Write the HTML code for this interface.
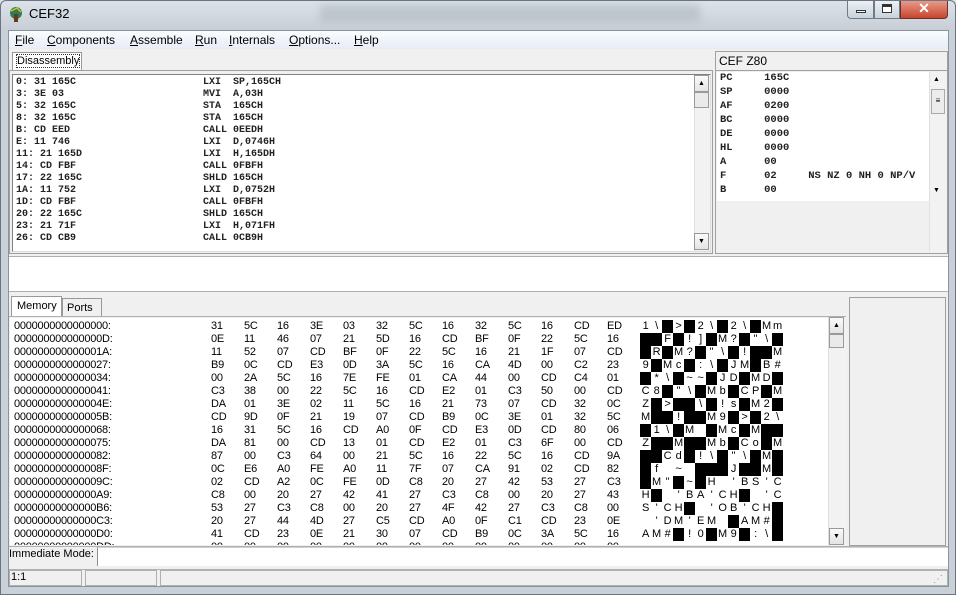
<!DOCTYPE html>
<html><head><meta charset="utf-8">
<style>
*{margin:0;padding:0;box-sizing:border-box}
body{width:956px;height:595px;overflow:hidden;background:#c9d0d8;font-family:"Liberation Sans",sans-serif;position:relative}
.abs{position:absolute}
#title{left:0;top:0;width:956px;height:30px;background:linear-gradient(#dde3ea,#c8ced6)}
#frame{left:0;top:0;width:956px;height:595px;border:1px solid #6b7480;border-radius:6px 6px 0 0}
#client{left:8px;top:30px;width:941px;height:557px;background:#f0f0f0;border:1px solid #8a949f}
#menu{left:9px;top:31px;width:939px;height:18px;background:linear-gradient(#fafcff,#e6ecf6);font-size:12px}
#menu span{position:absolute;top:2px}
.mono{font-family:"Liberation Mono",monospace;font-weight:bold;font-size:10px;color:#222}
.sb{background:#f2f2f2;border-left:1px solid #e0e0e0}
.arr{position:absolute;width:15px;height:17px;background:linear-gradient(#fafafa,#e4e4e4);border:1px solid #9a9a9a;font-size:7px;text-align:center;line-height:15px;color:#000}
.row{position:absolute;left:14px;height:13px;font-size:11px;line-height:13px;white-space:nowrap;color:#000;letter-spacing:-0.25px}
.row i{font-style:normal;position:absolute;top:0}
.row b{font-weight:normal;position:absolute;top:0;width:11px;height:13px;text-align:center}
.row b.k{background:#000}
</style></head><body>
<div class="abs" id="title"></div>
<div class="abs" style="left:320px;top:4px;width:380px;height:18px;background:rgba(150,160,170,.35);filter:blur(4px)"></div>
<svg class="abs" style="left:7px;top:5px" width="18" height="18"><circle cx="9" cy="8" r="6" fill="#2e7d5a"/><rect x="7" y="9" width="4" height="8" fill="#6b3a1a"/><path d="M4 6l6-3 4 4" stroke="#d8c020" fill="none" stroke-width="1.5"/></svg>
<div class="abs" style="left:29px;top:6px;font-size:13px;color:#000">CEF32</div>
<!-- window buttons -->
<div class="abs" style="left:847px;top:0;width:27px;height:19px;border:1px solid #6d7a88;border-top:0;border-radius:0 0 0 4px;background:linear-gradient(#eef2f6,#c9d2dc)"><div class="abs" style="left:8px;top:10px;width:10px;height:3px;border:1px solid #333;background:#fff"></div></div>
<div class="abs" style="left:874px;top:0;width:26px;height:19px;border:1px solid #6d7a88;border-top:0;background:linear-gradient(#eef2f6,#c9d2dc)"><div class="abs" style="left:7px;top:4px;width:10px;height:9px;border:1px solid #333;border-top:3px solid #333;background:#fff"></div></div>
<div class="abs" style="left:900px;top:0;width:48px;height:19px;border:1px solid #6d3030;border-top:0;border-radius:0 0 4px 0;background:linear-gradient(#e8a08e,#c8452e);color:#fff;font-weight:bold;font-size:14px;text-align:center;line-height:17px">✕</div>
<div class="abs" id="client"></div>
<div class="abs" id="menu">
<span style="left:6px"><u>F</u>ile</span><span style="left:38px"><u>C</u>omponents</span><span style="left:121px"><u>A</u>ssemble</span><span style="left:186px"><u>R</u>un</span><span style="left:220px"><u>I</u>nternals</span><span style="left:280px"><u>O</u>ptions...</span><span style="left:345px"><u>H</u>elp</span>
</div>
<!-- disassembly tab -->
<div class="abs" style="left:12px;top:52px;width:70px;height:19px;background:#fff;border:1px solid #999;border-bottom:0;font-size:11px;padding:2px 0 0 4px"><span style="outline:1px dotted #333">Disassembly</span></div>
<div class="abs" style="left:9px;top:70px;width:704px;height:184px;border:1px solid #a0a0a0;background:#f0f0f0"></div>
<div class="abs" style="left:12px;top:74px;width:699px;height:178px;border:1px solid #808080;border-right:1px solid #ddd;border-bottom:1px solid #ddd;background:#fff"></div>
<div class="abs sb" style="left:694px;top:75px;width:16px;height:176px"></div>
<div class="arr" style="left:694px;top:75px">▲</div>
<div class="arr" style="left:694px;top:92px;height:16px;background:#eaeaea"></div>
<div class="arr" style="left:694px;top:233px">▼</div>
<div class="abs mono" style="left:16px;top:77px;line-height:12px;white-space:pre">0: 31 165C
3: 3E 03
5: 32 165C
8: 32 165C
B: CD EED
E: 11 746
11: 21 165D
14: CD FBF
17: 22 165C
1A: 11 752
1D: CD FBF
20: 22 165C
23: 21 71F
26: CD CB9</div>
<div class="abs mono" style="left:203px;top:77px;line-height:12px;white-space:pre">LXI  SP,165CH
MVI  A,03H
STA  165CH
STA  165CH
CALL 0EEDH
LXI  D,0746H
LXI  H,165DH
CALL 0FBFH
SHLD 165CH
LXI  D,0752H
CALL 0FBFH
SHLD 165CH
LXI  H,071FH
CALL 0CB9H</div>
<!-- register pane -->
<div class="abs" style="left:715px;top:51px;width:233px;height:203px;border:1px solid #a0a0a0;background:#f0f0f0"></div>
<div class="abs" style="left:719px;top:54px;font-size:12px">CEF Z80</div>
<div class="abs" style="left:716px;top:70px;width:231px;height:1px;background:#a0a0a0"></div>
<div class="abs" style="left:717px;top:72px;width:212px;height:129px;background:#fff"></div>
<div class="abs sb" style="left:929px;top:72px;width:17px;height:180px"></div>
<div class="abs" style="left:933px;top:76px;font-size:7px">▲</div>
<div class="abs" style="left:931px;top:89px;width:14px;height:25px;border:1px solid #aaa;background:#ececec;font-size:8px;text-align:center;line-height:22px">≡</div>
<div class="abs" style="left:933px;top:187px;font-size:7px">▼</div>
<div class="abs mono" style="left:720px;top:71px;line-height:14px;white-space:pre;font-size:10.5px">PC     165C
SP     0000
AF     0200
BC     0000
DE     0000
HL     0000
A      00
F      02     NS NZ 0 NH 0 NP/V
B      00</div>
<!-- white band -->
<div class="abs" style="left:9px;top:256px;width:939px;height:36px;background:#fff;border-top:1px solid #b0b0b0;border-bottom:1px solid #b0b0b0"></div>
<!-- memory tabs -->
<div class="abs" style="left:11px;top:296px;width:51px;height:21px;background:#fff;border:1px solid #999;border-bottom:0;font-size:11px;padding:3px 0 0 5px">Memory</div>
<div class="abs" style="left:62px;top:298px;width:40px;height:19px;background:#f0f0f0;border:1px solid #999;border-bottom:0;font-size:11px;padding:3px 0 0 4px">Ports</div>
<div class="abs" style="left:9px;top:316px;width:837px;height:1px;background:#b0b0b0"></div>
<div class="abs" style="left:10px;top:318px;width:818px;height:227px;background:#fff;overflow:hidden">
<div style="position:relative;left:-10px;top:-318px">
<div class="row" style="top:320px">0000000000000000:<i style="left:197px">31</i><i style="left:230px">5C</i><i style="left:263px">16</i><i style="left:296px">3E</i><i style="left:329px">03</i><i style="left:362px">32</i><i style="left:395px">5C</i><i style="left:428px">16</i><i style="left:461px">32</i><i style="left:494px">5C</i><i style="left:527px">16</i><i style="left:560px">CD</i><i style="left:593px">ED</i><b style="left:626px">1</b><b style="left:637px">\</b><b class="k" style="left:648px"></b><b style="left:659px">&gt;</b><b class="k" style="left:670px"></b><b style="left:681px">2</b><b style="left:692px">\</b><b class="k" style="left:703px"></b><b style="left:714px">2</b><b style="left:725px">\</b><b class="k" style="left:736px"></b><b style="left:747px">M</b><b style="left:758px">m</b></div>
<div class="row" style="top:333px">000000000000000D:<i style="left:197px">0E</i><i style="left:230px">11</i><i style="left:263px">46</i><i style="left:296px">07</i><i style="left:329px">21</i><i style="left:362px">5D</i><i style="left:395px">16</i><i style="left:428px">CD</i><i style="left:461px">BF</i><i style="left:494px">0F</i><i style="left:527px">22</i><i style="left:560px">5C</i><i style="left:593px">16</i><b class="k" style="left:626px"></b><b class="k" style="left:637px"></b><b style="left:648px">F</b><b class="k" style="left:659px"></b><b style="left:670px">!</b><b style="left:681px">]</b><b class="k" style="left:692px"></b><b style="left:703px">M</b><b style="left:714px">?</b><b class="k" style="left:725px"></b><b style="left:736px">"</b><b style="left:747px">\</b><b class="k" style="left:758px"></b></div>
<div class="row" style="top:346px">000000000000001A:<i style="left:197px">11</i><i style="left:230px">52</i><i style="left:263px">07</i><i style="left:296px">CD</i><i style="left:329px">BF</i><i style="left:362px">0F</i><i style="left:395px">22</i><i style="left:428px">5C</i><i style="left:461px">16</i><i style="left:494px">21</i><i style="left:527px">1F</i><i style="left:560px">07</i><i style="left:593px">CD</i><b class="k" style="left:626px"></b><b style="left:637px">R</b><b class="k" style="left:648px"></b><b style="left:659px">M</b><b style="left:670px">?</b><b class="k" style="left:681px"></b><b style="left:692px">"</b><b style="left:703px">\</b><b class="k" style="left:714px"></b><b style="left:725px">!</b><b class="k" style="left:736px"></b><b class="k" style="left:747px"></b><b style="left:758px">M</b></div>
<div class="row" style="top:359px">0000000000000027:<i style="left:197px">B9</i><i style="left:230px">0C</i><i style="left:263px">CD</i><i style="left:296px">E3</i><i style="left:329px">0D</i><i style="left:362px">3A</i><i style="left:395px">5C</i><i style="left:428px">16</i><i style="left:461px">CA</i><i style="left:494px">4D</i><i style="left:527px">00</i><i style="left:560px">C2</i><i style="left:593px">23</i><b style="left:626px">9</b><b class="k" style="left:637px"></b><b style="left:648px">M</b><b style="left:659px">c</b><b class="k" style="left:670px"></b><b style="left:681px">:</b><b style="left:692px">\</b><b class="k" style="left:703px"></b><b style="left:714px">J</b><b style="left:725px">M</b><b class="k" style="left:736px"></b><b style="left:747px">B</b><b style="left:758px">#</b></div>
<div class="row" style="top:372px">0000000000000034:<i style="left:197px">00</i><i style="left:230px">2A</i><i style="left:263px">5C</i><i style="left:296px">16</i><i style="left:329px">7E</i><i style="left:362px">FE</i><i style="left:395px">01</i><i style="left:428px">CA</i><i style="left:461px">44</i><i style="left:494px">00</i><i style="left:527px">CD</i><i style="left:560px">C4</i><i style="left:593px">01</i><b class="k" style="left:626px"></b><b style="left:637px">*</b><b style="left:648px">\</b><b class="k" style="left:659px"></b><b style="left:670px">~</b><b style="left:681px">~</b><b class="k" style="left:692px"></b><b style="left:703px">J</b><b style="left:714px">D</b><b class="k" style="left:725px"></b><b style="left:736px">M</b><b style="left:747px">D</b><b class="k" style="left:758px"></b></div>
<div class="row" style="top:385px">0000000000000041:<i style="left:197px">C3</i><i style="left:230px">38</i><i style="left:263px">00</i><i style="left:296px">22</i><i style="left:329px">5C</i><i style="left:362px">16</i><i style="left:395px">CD</i><i style="left:428px">E2</i><i style="left:461px">01</i><i style="left:494px">C3</i><i style="left:527px">50</i><i style="left:560px">00</i><i style="left:593px">CD</i><b style="left:626px">C</b><b style="left:637px">8</b><b class="k" style="left:648px"></b><b style="left:659px">"</b><b style="left:670px">\</b><b class="k" style="left:681px"></b><b style="left:692px">M</b><b style="left:703px">b</b><b class="k" style="left:714px"></b><b style="left:725px">C</b><b style="left:736px">P</b><b class="k" style="left:747px"></b><b style="left:758px">M</b></div>
<div class="row" style="top:398px">000000000000004E:<i style="left:197px">DA</i><i style="left:230px">01</i><i style="left:263px">3E</i><i style="left:296px">02</i><i style="left:329px">11</i><i style="left:362px">5C</i><i style="left:395px">16</i><i style="left:428px">21</i><i style="left:461px">73</i><i style="left:494px">07</i><i style="left:527px">CD</i><i style="left:560px">32</i><i style="left:593px">0C</i><b style="left:626px">Z</b><b class="k" style="left:637px"></b><b style="left:648px">&gt;</b><b class="k" style="left:659px"></b><b class="k" style="left:670px"></b><b style="left:681px">\</b><b class="k" style="left:692px"></b><b style="left:703px">!</b><b style="left:714px">s</b><b class="k" style="left:725px"></b><b style="left:736px">M</b><b style="left:747px">2</b><b class="k" style="left:758px"></b></div>
<div class="row" style="top:411px">000000000000005B:<i style="left:197px">CD</i><i style="left:230px">9D</i><i style="left:263px">0F</i><i style="left:296px">21</i><i style="left:329px">19</i><i style="left:362px">07</i><i style="left:395px">CD</i><i style="left:428px">B9</i><i style="left:461px">0C</i><i style="left:494px">3E</i><i style="left:527px">01</i><i style="left:560px">32</i><i style="left:593px">5C</i><b style="left:626px">M</b><b class="k" style="left:637px"></b><b class="k" style="left:648px"></b><b style="left:659px">!</b><b class="k" style="left:670px"></b><b class="k" style="left:681px"></b><b style="left:692px">M</b><b style="left:703px">9</b><b class="k" style="left:714px"></b><b style="left:725px">&gt;</b><b class="k" style="left:736px"></b><b style="left:747px">2</b><b style="left:758px">\</b></div>
<div class="row" style="top:424px">0000000000000068:<i style="left:197px">16</i><i style="left:230px">31</i><i style="left:263px">5C</i><i style="left:296px">16</i><i style="left:329px">CD</i><i style="left:362px">A0</i><i style="left:395px">0F</i><i style="left:428px">CD</i><i style="left:461px">E3</i><i style="left:494px">0D</i><i style="left:527px">CD</i><i style="left:560px">80</i><i style="left:593px">06</i><b class="k" style="left:626px"></b><b style="left:637px">1</b><b style="left:648px">\</b><b class="k" style="left:659px"></b><b style="left:670px">M</b><b style="left:681px"> </b><b class="k" style="left:692px"></b><b style="left:703px">M</b><b style="left:714px">c</b><b class="k" style="left:725px"></b><b style="left:736px">M</b><b class="k" style="left:747px"></b><b class="k" style="left:758px"></b></div>
<div class="row" style="top:437px">0000000000000075:<i style="left:197px">DA</i><i style="left:230px">81</i><i style="left:263px">00</i><i style="left:296px">CD</i><i style="left:329px">13</i><i style="left:362px">01</i><i style="left:395px">CD</i><i style="left:428px">E2</i><i style="left:461px">01</i><i style="left:494px">C3</i><i style="left:527px">6F</i><i style="left:560px">00</i><i style="left:593px">CD</i><b style="left:626px">Z</b><b class="k" style="left:637px"></b><b class="k" style="left:648px"></b><b style="left:659px">M</b><b class="k" style="left:670px"></b><b class="k" style="left:681px"></b><b style="left:692px">M</b><b style="left:703px">b</b><b class="k" style="left:714px"></b><b style="left:725px">C</b><b style="left:736px">o</b><b class="k" style="left:747px"></b><b style="left:758px">M</b></div>
<div class="row" style="top:450px">0000000000000082:<i style="left:197px">87</i><i style="left:230px">00</i><i style="left:263px">C3</i><i style="left:296px">64</i><i style="left:329px">00</i><i style="left:362px">21</i><i style="left:395px">5C</i><i style="left:428px">16</i><i style="left:461px">22</i><i style="left:494px">5C</i><i style="left:527px">16</i><i style="left:560px">CD</i><i style="left:593px">9A</i><b class="k" style="left:626px"></b><b class="k" style="left:637px"></b><b style="left:648px">C</b><b style="left:659px">d</b><b class="k" style="left:670px"></b><b style="left:681px">!</b><b style="left:692px">\</b><b class="k" style="left:703px"></b><b style="left:714px">"</b><b style="left:725px">\</b><b class="k" style="left:736px"></b><b style="left:747px">M</b><b class="k" style="left:758px"></b></div>
<div class="row" style="top:463px">000000000000008F:<i style="left:197px">0C</i><i style="left:230px">E6</i><i style="left:263px">A0</i><i style="left:296px">FE</i><i style="left:329px">A0</i><i style="left:362px">11</i><i style="left:395px">7F</i><i style="left:428px">07</i><i style="left:461px">CA</i><i style="left:494px">91</i><i style="left:527px">02</i><i style="left:560px">CD</i><i style="left:593px">82</i><b class="k" style="left:626px"></b><b style="left:637px">f</b><b style="left:648px"> </b><b style="left:659px">~</b><b style="left:670px"> </b><b class="k" style="left:681px"></b><b class="k" style="left:692px"></b><b class="k" style="left:703px"></b><b style="left:714px">J</b><b class="k" style="left:725px"></b><b class="k" style="left:736px"></b><b style="left:747px">M</b><b class="k" style="left:758px"></b></div>
<div class="row" style="top:476px">000000000000009C:<i style="left:197px">02</i><i style="left:230px">CD</i><i style="left:263px">A2</i><i style="left:296px">0C</i><i style="left:329px">FE</i><i style="left:362px">0D</i><i style="left:395px">C8</i><i style="left:428px">20</i><i style="left:461px">27</i><i style="left:494px">42</i><i style="left:527px">53</i><i style="left:560px">27</i><i style="left:593px">C3</i><b class="k" style="left:626px"></b><b style="left:637px">M</b><b style="left:648px">"</b><b class="k" style="left:659px"></b><b style="left:670px">~</b><b class="k" style="left:681px"></b><b style="left:692px">H</b><b style="left:703px"> </b><b style="left:714px">'</b><b style="left:725px">B</b><b style="left:736px">S</b><b style="left:747px">'</b><b style="left:758px">C</b></div>
<div class="row" style="top:489px">00000000000000A9:<i style="left:197px">C8</i><i style="left:230px">00</i><i style="left:263px">20</i><i style="left:296px">27</i><i style="left:329px">42</i><i style="left:362px">41</i><i style="left:395px">27</i><i style="left:428px">C3</i><i style="left:461px">C8</i><i style="left:494px">00</i><i style="left:527px">20</i><i style="left:560px">27</i><i style="left:593px">43</i><b style="left:626px">H</b><b class="k" style="left:637px"></b><b style="left:648px"> </b><b style="left:659px">'</b><b style="left:670px">B</b><b style="left:681px">A</b><b style="left:692px">'</b><b style="left:703px">C</b><b style="left:714px">H</b><b class="k" style="left:725px"></b><b style="left:736px"> </b><b style="left:747px">'</b><b style="left:758px">C</b></div>
<div class="row" style="top:502px">00000000000000B6:<i style="left:197px">53</i><i style="left:230px">27</i><i style="left:263px">C3</i><i style="left:296px">C8</i><i style="left:329px">00</i><i style="left:362px">20</i><i style="left:395px">27</i><i style="left:428px">4F</i><i style="left:461px">42</i><i style="left:494px">27</i><i style="left:527px">C3</i><i style="left:560px">C8</i><i style="left:593px">00</i><b style="left:626px">S</b><b style="left:637px">'</b><b style="left:648px">C</b><b style="left:659px">H</b><b class="k" style="left:670px"></b><b style="left:681px"> </b><b style="left:692px">'</b><b style="left:703px">O</b><b style="left:714px">B</b><b style="left:725px">'</b><b style="left:736px">C</b><b style="left:747px">H</b><b class="k" style="left:758px"></b></div>
<div class="row" style="top:515px">00000000000000C3:<i style="left:197px">20</i><i style="left:230px">27</i><i style="left:263px">44</i><i style="left:296px">4D</i><i style="left:329px">27</i><i style="left:362px">C5</i><i style="left:395px">CD</i><i style="left:428px">A0</i><i style="left:461px">0F</i><i style="left:494px">C1</i><i style="left:527px">CD</i><i style="left:560px">23</i><i style="left:593px">0E</i><b style="left:626px"> </b><b style="left:637px">'</b><b style="left:648px">D</b><b style="left:659px">M</b><b style="left:670px">'</b><b style="left:681px">E</b><b style="left:692px">M</b><b style="left:703px"> </b><b class="k" style="left:714px"></b><b style="left:725px">A</b><b style="left:736px">M</b><b style="left:747px">#</b><b class="k" style="left:758px"></b></div>
<div class="row" style="top:528px">00000000000000D0:<i style="left:197px">41</i><i style="left:230px">CD</i><i style="left:263px">23</i><i style="left:296px">0E</i><i style="left:329px">21</i><i style="left:362px">30</i><i style="left:395px">07</i><i style="left:428px">CD</i><i style="left:461px">B9</i><i style="left:494px">0C</i><i style="left:527px">3A</i><i style="left:560px">5C</i><i style="left:593px">16</i><b style="left:626px">A</b><b style="left:637px">M</b><b style="left:648px">#</b><b class="k" style="left:659px"></b><b style="left:670px">!</b><b style="left:681px">0</b><b class="k" style="left:692px"></b><b style="left:703px">M</b><b style="left:714px">9</b><b class="k" style="left:725px"></b><b style="left:736px">:</b><b style="left:747px">\</b><b class="k" style="left:758px"></b></div>
<div class="row" style="top:541px">00000000000000DD:<i style="left:197px">00</i><i style="left:230px">00</i><i style="left:263px">00</i><i style="left:296px">00</i><i style="left:329px">00</i><i style="left:362px">00</i><i style="left:395px">00</i><i style="left:428px">00</i><i style="left:461px">00</i><i style="left:494px">00</i><i style="left:527px">00</i><i style="left:560px">00</i><i style="left:593px">00</i></div>
</div></div>
<div class="abs sb" style="left:828px;top:317px;width:18px;height:229px"></div>
<div class="arr" style="left:829px;top:317px">▲</div>
<div class="arr" style="left:829px;top:334px;height:14px;background:#eaeaea"></div>
<div class="arr" style="left:829px;top:528px">▼</div>
<div class="abs" style="left:849px;top:297px;width:97px;height:249px;border:1px solid #a0a0a0;background:#f0f0f0"></div>
<!-- immediate mode -->
<div class="abs" style="left:9px;top:546px;width:939px;height:1px;background:#b0b0b0"></div>
<div class="abs" style="left:9px;top:548px;font-size:11px">Immediate Mode:</div>
<div class="abs" style="left:97px;top:547px;width:851px;height:19px;background:#fff;border-left:1px solid #909090;border-top:1px solid #d0d0d0"></div>
<!-- status -->
<div class="abs" style="left:9px;top:569px;width:939px;height:17px;background:#f0f0f0;border-top:1px solid #b0b0b0"></div>
<div class="abs" style="left:9px;top:570px;width:73px;height:16px;border:1px solid #b0b0b0;font-size:11px;padding-left:1px">1:1</div>
<div class="abs" style="left:85px;top:570px;width:72px;height:16px;border:1px solid #b0b0b0"></div>
<div class="abs" style="left:160px;top:570px;width:788px;height:16px;border:1px solid #b0b0b0"></div>
<div class="abs" style="left:933px;top:574px;font-size:10px;color:#999">⋰</div>
<div class="abs" id="frame"></div>
</body></html>
